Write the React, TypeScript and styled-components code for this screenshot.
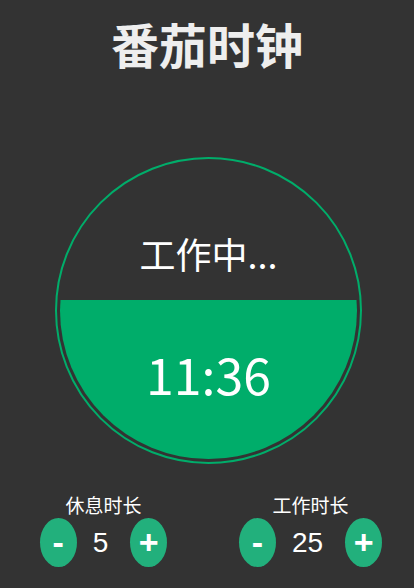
import React, { useState } from "react";
import styled, { createGlobalStyle } from "styled-components";

const Global = createGlobalStyle`
  html, body { margin: 0; padding: 0; background: #333333; }
  body { font-family: "Noto Sans CJK SC", "Noto Sans", sans-serif; color: #fff; }
`;

const Page = styled.div`
  width: 414px;
  min-height: 588px;
  background: #333333;
  display: flex;
  flex-direction: column;
  align-items: center;
`;

const Title = styled.h1`
  margin: 18px 0 0;
  font-size: 48px;
  line-height: 50px;
  font-weight: 700;
  color: #eeeeee;
  font-family: "Noto Sans CJK SC", sans-serif;
`;

const Ring = styled.div`
  margin-top: 89px;
  width: 297px;
  height: 297px;
  border: 2px solid #00ad6a;
  border-radius: 50%;
  padding: 3px;
  margin-left: 3px;
`;

const Dial = styled.div`
  width: 100%;
  height: 100%;
  border-radius: 50%;
  overflow: hidden;
  display: flex;
  flex-direction: column;
`;

const Upper = styled.div`
  flex: 1;
  display: flex;
  align-items: flex-end;
  justify-content: center;
  padding-bottom: 29px;
`;

const Status = styled.div`
  font-size: 36px;
  line-height: 36px;
  color: #ffffff;
`;

const Fill = styled.div`
  background: #00ad6a;
  display: flex;
  justify-content: center;
  align-items: flex-start;
  padding-top: 48px;
  box-sizing: border-box;
`;

const Time = styled.div`
  font-size: 50px;
  line-height: 50px;
  color: #ffffff;
`;

const Controls = styled.div`
  margin-top: 30px;
  width: 100%;
  display: flex;
`;

const Group = styled.div`
  flex: 1;
  display: flex;
  flex-direction: column;
  align-items: center;
`;

const Label = styled.div`
  font-size: 19px;
  line-height: 22px;
  color: #ffffff;
  margin-bottom: 2px;
`;

const Row = styled.div`
  display: flex;
  align-items: center;
`;

const Btn = styled.button`
  width: 37px;
  height: 49px;
  border: none;
  border-radius: 50%;
  background: #22b07c;
  color: #ffffff;
  font-family: "Liberation Sans", Arial, sans-serif;
  font-weight: 700;
  font-size: 34px;
  line-height: 49px;
  padding: 0;
  display: flex;
  align-items: center;
  justify-content: center;
  cursor: pointer;
`;

const Value = styled.span`
  font-family: "Liberation Sans", Arial, sans-serif;
  font-size: 28px;
  margin: 0 22px 0 16px;
  color: #ffffff;
`;

function Stepper({ label, value, onChange }: { label: string; value: number; onChange: (v: number) => void }) {
  return (
    <Group>
      <Label>{label}</Label>
      <Row>
        <Btn onClick={() => onChange(Math.max(1, value - 1))}>-</Btn>
        <Value>{value}</Value>
        <Btn onClick={() => onChange(value + 1)}>+</Btn>
      </Row>
    </Group>
  );
}

export default function App() {
  const [rest, setRest] = useState(5);
  const [work, setWork] = useState(25);
  const progress = 53.4;
  return (
    <Page>
      <Global />
      <Title>番茄时钟</Title>
      <Ring>
        <Dial>
          <Upper>
            <Status>工作中...</Status>
          </Upper>
          <Fill style={{ height: `${progress}%` }}>
            <Time>11:36</Time>
          </Fill>
        </Dial>
      </Ring>
      <Controls>
        <Stepper label="休息时长" value={rest} onChange={setRest} />
        <Stepper label="工作时长" value={work} onChange={setWork} />
      </Controls>
    </Page>
  );
}
